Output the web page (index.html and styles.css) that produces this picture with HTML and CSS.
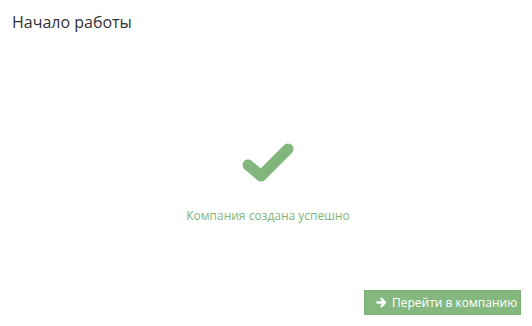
FILE: index.html
```html
<!DOCTYPE html>
<html lang="ru">
<head>
<meta charset="utf-8">
<link rel="stylesheet" href="styles.css">
</head>
<body>
<div class="page">
  <h1 class="title">Начало работы</h1>
  <div class="center">
    <svg class="check" width="52" height="39" viewBox="0 0 52 39">
      <path d="M6 22 L19 33 L46 6" fill="none" stroke="#82b67c" stroke-width="11" stroke-linecap="round" stroke-linejoin="round"/>
    </svg>
    <div class="msg">Компания создана успешно</div>
  </div>
  <div class="actions">
    <button class="btn">
      <svg class="arrow" width="11" height="11" viewBox="0 0 11 11">
        <path d="M1.5 5.5 H8.5 M5.5 1.8 L9 5.5 L5.5 9.2" fill="none" stroke="#fff" stroke-width="2.4" stroke-linecap="round" stroke-linejoin="round"/>
      </svg>
      <span>Перейти в компанию</span>
    </button>
  </div>
</div>
</body>
</html>
```

FILE: styles.css
```css
html, body {
  margin: 0;
  padding: 0;
  background: #fff;
}
body {
  font-family: "Open Sans", "DejaVu Sans", sans-serif;
  width: 532px;
  height: 326px;
  overflow: hidden;
}
.page {
  display: flex;
  flex-direction: column;
  height: 326px;
  box-sizing: border-box;
  padding: 11px 11px 11px 12px;
}
.title {
  margin: 0;
  font-size: 16px;
  font-weight: 400;
  line-height: 22px;
  color: #333;
}
.center {
  display: flex;
  flex-direction: column;
  align-items: center;
  margin-top: 110px;
  padding-left: 3px;
}
.check {
  display: block;
}
.msg {
  margin-top: 26px;
  font-size: 12px;
  line-height: 16px;
  color: #82b67c;
}
.actions {
  display: flex;
  justify-content: flex-end;
  margin-top: auto;
}
.btn {
  display: flex;
  align-items: center;
  gap: 5px;
  width: 157px;
  height: 25px;
  box-sizing: border-box;
  padding: 0 0 0 11px;
  background: #85b87f;
  border: 1px solid #7bb075;
  border-radius: 0;
  color: #fff;
  font-family: "Open Sans", "DejaVu Sans", sans-serif;
  font-size: 12px;
}
.arrow {
  display: block;
}
```
